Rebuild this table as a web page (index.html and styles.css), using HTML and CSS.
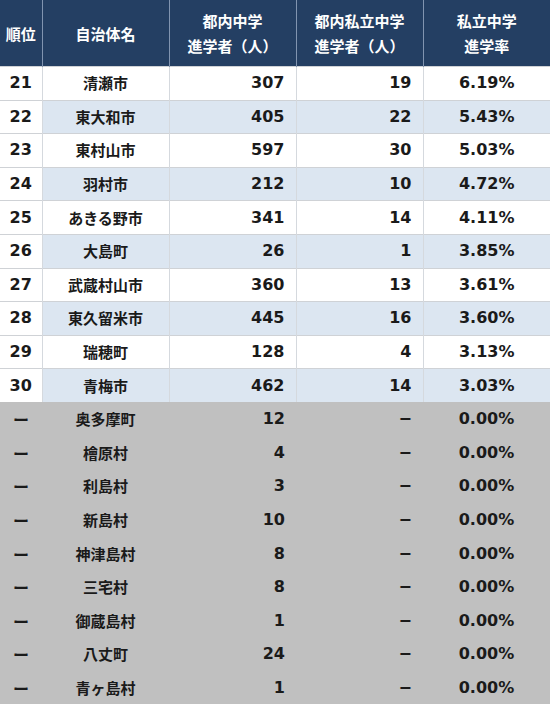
FILE: index.html
```html
<!DOCTYPE html>
<html lang="ja">
<head>
<meta charset="utf-8">
<title>私立中学進学率</title>
<link rel="stylesheet" href="styles.css">
</head>
<body>
<table class="rank-table">
  <colgroup>
    <col class="c-rank"><col class="c-name"><col class="c-num"><col class="c-num"><col class="c-num">
  </colgroup>
  <thead>
    <tr>
      <th>順位</th>
      <th>自治体名</th>
      <th>都内中学<br>進学者（人）</th>
      <th>都内私立中学<br>進学者（人）</th>
      <th>私立中学<br>進学率</th>
    </tr>
  </thead>
  <tbody>
    <tr class="odd"><td class="rank">21</td><td class="name">清瀬市</td><td class="num">307</td><td class="num">19</td><td class="rate">6.19%</td></tr>
    <tr class="even"><td class="rank">22</td><td class="name">東大和市</td><td class="num">405</td><td class="num">22</td><td class="rate">5.43%</td></tr>
    <tr class="odd"><td class="rank">23</td><td class="name">東村山市</td><td class="num">597</td><td class="num">30</td><td class="rate">5.03%</td></tr>
    <tr class="even"><td class="rank">24</td><td class="name">羽村市</td><td class="num">212</td><td class="num">10</td><td class="rate">4.72%</td></tr>
    <tr class="odd"><td class="rank">25</td><td class="name">あきる野市</td><td class="num">341</td><td class="num">14</td><td class="rate">4.11%</td></tr>
    <tr class="even"><td class="rank">26</td><td class="name">大島町</td><td class="num">26</td><td class="num">1</td><td class="rate">3.85%</td></tr>
    <tr class="odd"><td class="rank">27</td><td class="name">武蔵村山市</td><td class="num">360</td><td class="num">13</td><td class="rate">3.61%</td></tr>
    <tr class="even"><td class="rank">28</td><td class="name">東久留米市</td><td class="num">445</td><td class="num">16</td><td class="rate">3.60%</td></tr>
    <tr class="odd"><td class="rank">29</td><td class="name">瑞穂町</td><td class="num">128</td><td class="num">4</td><td class="rate">3.13%</td></tr>
    <tr class="even"><td class="rank">30</td><td class="name">青梅市</td><td class="num">462</td><td class="num">14</td><td class="rate">3.03%</td></tr>
    <tr class="none"><td class="rank">ー</td><td class="name">奥多摩町</td><td class="num">12</td><td class="num dash">−</td><td class="rate">0.00%</td></tr>
    <tr class="none"><td class="rank">ー</td><td class="name">檜原村</td><td class="num">4</td><td class="num dash">−</td><td class="rate">0.00%</td></tr>
    <tr class="none"><td class="rank">ー</td><td class="name">利島村</td><td class="num">3</td><td class="num dash">−</td><td class="rate">0.00%</td></tr>
    <tr class="none"><td class="rank">ー</td><td class="name">新島村</td><td class="num">10</td><td class="num dash">−</td><td class="rate">0.00%</td></tr>
    <tr class="none"><td class="rank">ー</td><td class="name">神津島村</td><td class="num">8</td><td class="num dash">−</td><td class="rate">0.00%</td></tr>
    <tr class="none"><td class="rank">ー</td><td class="name">三宅村</td><td class="num">8</td><td class="num dash">−</td><td class="rate">0.00%</td></tr>
    <tr class="none"><td class="rank">ー</td><td class="name">御蔵島村</td><td class="num">1</td><td class="num dash">−</td><td class="rate">0.00%</td></tr>
    <tr class="none"><td class="rank">ー</td><td class="name">八丈町</td><td class="num">24</td><td class="num dash">−</td><td class="rate">0.00%</td></tr>
    <tr class="none"><td class="rank">ー</td><td class="name">青ヶ島村</td><td class="num">1</td><td class="num dash">−</td><td class="rate">0.00%</td></tr>
  </tbody>
</table>
</body>
</html>
```
FILE: styles.css
```css
html, body {
  margin: 0;
  padding: 0;
  background: #c0c0c0;
}

.rank-table {
  width: 550px;
  border-collapse: collapse;
  table-layout: fixed;
  font-family: "DejaVu Sans", "Noto Sans CJK JP", sans-serif;
  font-weight: bold;
  color: #1a1a1a;
}

.c-rank { width: 42px; }
.c-name { width: 127px; }
.c-num { width: 127px; }

.rank-table th {
  height: 66px;
  padding: 0;
  background: #243f63;
  color: #ffffff;
  font-family: "Noto Sans CJK JP", sans-serif;
  font-size: 15px;
  line-height: 25px;
  font-weight: bold;
  text-align: center;
  vertical-align: middle;
  border-left: 1px solid #8194b0;
}

.rank-table th:first-child {
  border-left: none;
}

.rank-table td {
  height: 33.6px;
  box-sizing: border-box;
  padding: 0;
  font-size: 16px;
  line-height: 20px;
  vertical-align: middle;
  background: #ffffff;
  border-left: 1px solid #d5d9de;
  border-top: 1px solid #cfd2d6;
}

.rank-table td:first-child {
  border-left: none;
}

.rank-table td.rank {
  text-align: center;
}

.rank-table td.name {
  text-align: center;
  font-family: "Noto Sans CJK JP", sans-serif;
  font-size: 15px;
}

.rank-table td.num {
  text-align: right;
  padding-right: 11px;
}

.rank-table td.rate {
  text-align: center;
}

.rank-table tr.even td {
  background: #dce6f1;
}

.rank-table tr.even td.rank {
  background: #ffffff;
}

.rank-table tr.none td {
  background: #c0c0c0;
  border-left: none;
  border-top: none;
}

.rank-table tr.none td.rank {
  font-family: "Noto Sans CJK JP", sans-serif;
  font-size: 16px;
}

.rank-table td.dash {
  padding-right: 11px;
}
```
